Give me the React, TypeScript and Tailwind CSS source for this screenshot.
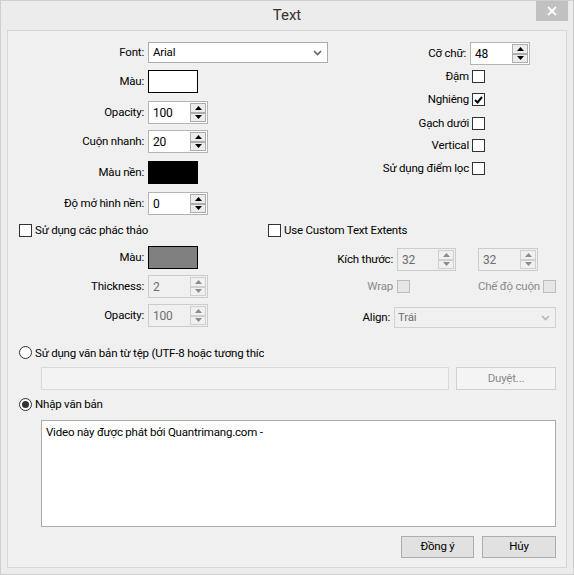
import type { ReactNode } from "react";

function Triangle({ up, disabled }: { up?: boolean; disabled?: boolean }) {
  const color = disabled ? "#8c8c8c" : "#000000";
  return (
    <svg width="7" height="4" viewBox="0 0 7 4">
      {up ? <path d="M0 4 L3.5 0 L7 4 Z" fill={color} /> : <path d="M0 0 L3.5 4 L7 0 Z" fill={color} />}
    </svg>
  );
}

function Spin({ value, disabled, className = "w-[60px]" }: { value: string; disabled?: boolean; className?: string }) {
  return (
    <div
      className={`flex h-[23px] border ${className} ${
        disabled ? "border-[#cccccc] bg-[#f0f0f0] text-[#6d6d6d]" : "border-[#b4b4b4] bg-white text-black"
      }`}
    >
      <span className="flex flex-1 items-center pl-[4px] text-[12px]">{value}</span>
      <div className="flex w-[17px] flex-col py-[1px] pr-[1px]">
        <div
          className={`flex h-[10px] items-center justify-center border ${
            disabled ? "border-[#cfcfcf] bg-[#f0f0f0]" : "border-[#adadad] bg-[#ececec]"
          }`}
        >
          <Triangle up disabled={disabled} />
        </div>
        <div
          className={`flex h-[10px] items-center justify-center border ${
            disabled ? "border-[#cfcfcf] bg-[#f0f0f0]" : "border-[#adadad] bg-[#ececec]"
          }`}
        >
          <Triangle disabled={disabled} />
        </div>
      </div>
    </div>
  );
}

function Chevron({ disabled }: { disabled?: boolean }) {
  return (
    <svg width="9" height="6" viewBox="0 0 9 6">
      <path d="M1 1 L4.5 4.5 L8 1" fill="none" stroke={disabled ? "#b5b5b5" : "#606060"} strokeWidth="1.6" />
    </svg>
  );
}

function Check({ checked, disabled }: { checked?: boolean; disabled?: boolean }) {
  return (
    <div
      className={`flex h-[13px] w-[13px] shrink-0 items-center justify-center border ${
        disabled ? "border-[#bcbcbc] bg-[#e6e6e6]" : "border-[#333333] bg-white"
      }`}
    >
      {checked && (
        <svg width="9" height="8" viewBox="0 0 9 8">
          <path d="M1 4 L3.5 6.5 L8 1" fill="none" stroke="#000" strokeWidth="2" />
        </svg>
      )}
    </div>
  );
}

function Radio({ selected }: { selected?: boolean }) {
  return (
    <div className="flex h-[13px] w-[13px] shrink-0 items-center justify-center rounded-full border border-[#333333] bg-white">
      {selected && <div className="h-[7px] w-[7px] rounded-full bg-[#333333]" />}
    </div>
  );
}

function Row({ label, children, className = "" }: { label: string; children: ReactNode; className?: string }) {
  return (
    <div className={`flex items-center ${className}`}>
      <span className="w-[136px] text-right">{label}</span>
      <div className="ml-[4px]">{children}</div>
    </div>
  );
}

function Swatch({ color }: { color: string }) {
  return <div className={`h-[23px] w-[50px] border border-black ${color}`} />;
}

export default function App() {
  return (
    <div className="flex h-[575px] w-[574px] flex-col border border-[#cfcfcf] bg-[#ececec] font-['Roboto','Noto_Sans',sans-serif] text-[11.5px] leading-none tracking-[-0.2px] text-black">
      <div className="relative flex h-[29px] shrink-0 items-center justify-center">
        <span className="text-[15px] tracking-normal text-[#333333]">Text</span>
        <div className="absolute right-[5px] top-0 flex h-[20px] w-[32px] items-center justify-center bg-[#c1c1c1]">
          <svg width="10" height="10" viewBox="0 0 10 10">
            <path d="M1 1 L9 9 M9 1 L1 9" stroke="#fff" strokeWidth="1.8" />
          </svg>
        </div>
      </div>

      <div className="mx-[6px] mb-[6px] flex flex-1 flex-col border border-[#d6d6d6] bg-[#f0f0f0] pt-[11px]">
        {/* top section */}
        <div className="flex">
          <div className="flex flex-col">
            <Row label="Font:">
              <div className="flex h-[21px] w-[180px] items-center justify-between border border-[#acacac] bg-white pl-[4px] pr-[5px]">
                <span>Arial</span>
                <Chevron />
              </div>
            </Row>
            <Row label="Màu:" className="mt-[7px]">
              <Swatch color="bg-white" />
            </Row>
            <Row label="Opacity:" className="mt-[8px]">
              <Spin value="100" />
            </Row>
            <Row label="Cuộn nhanh:" className="mt-[6px]">
              <Spin value="20" />
            </Row>
            <Row label="Màu nền:" className="mt-[8px]">
              <Swatch color="bg-black" />
            </Row>
            <Row label="Độ mở hình nền:" className="mt-[8px]">
              <Spin value="0" />
            </Row>
          </div>

          <div className="ml-auto mr-[36px] flex flex-col items-end">
            <div className="flex items-center">
              <span>Cỡ chữ:</span>
              <div className="ml-[4px]">
                <Spin value="48" />
              </div>
            </div>
            <div className="mr-[45px] mt-[5px] flex h-[13px] items-center">
              <span className="mr-[3px]">Đậm</span>
              <Check />
            </div>
            <div className="mr-[45px] mt-[10px] flex h-[13px] items-center">
              <span className="mr-[3px]">Nghiêng</span>
              <Check checked />
            </div>
            <div className="mr-[45px] mt-[11px] flex h-[13px] items-center">
              <span className="mr-[3px]">Gạch dưới</span>
              <Check />
            </div>
            <div className="mr-[45px] mt-[9px] flex h-[13px] items-center">
              <span className="mr-[3px]">Vertical</span>
              <Check />
            </div>
            <div className="mr-[45px] mt-[10px] flex h-[13px] items-center">
              <span className="mr-[3px]">Sử dụng điểm lọc</span>
              <Check />
            </div>
          </div>
        </div>

        {/* middle section */}
        <div className="mt-[9px] flex">
          <div className="flex w-[252px] flex-col">
            <div className="ml-[11px] flex h-[13px] items-center">
              <Check />
              <span className="ml-[3px]">Sử dụng các phác thảo</span>
            </div>
            <Row label="Màu:" className="mt-[9px]">
              <Swatch color="bg-[#808080]" />
            </Row>
            <Row label="Thickness:" className="mt-[6px]">
              <Spin value="2" disabled />
            </Row>
            <Row label="Opacity:" className="mt-[6px]">
              <Spin value="100" disabled />
            </Row>
          </div>

          <div className="flex flex-1 flex-col">
            <div className="ml-[8px] flex h-[13px] items-center">
              <Check />
              <span className="ml-[3px]">Use Custom Text Extents</span>
            </div>
            <div className="mt-[11px] flex items-center">
              <span className="w-[133px] text-right">Kích thước:</span>
              <div className="ml-[4px]">
                <Spin value="32" disabled className="w-[59px]" />
              </div>
              <div className="ml-[22px]">
                <Spin value="32" disabled className="w-[60px]" />
              </div>
            </div>
            <div className="mt-[9px] flex h-[13px] items-center text-[#8a8a8a]">
              <span className="w-[133px] text-right">Wrap</span>
              <div className="ml-[4px]">
                <Check disabled />
              </div>
              <span className="w-[130px] text-right">Chế độ cuộn</span>
              <div className="ml-[3px]">
                <Check disabled />
              </div>
            </div>
            <div className="mt-[14px] flex items-center">
              <span className="w-[130px] text-right">Align:</span>
              <div className="ml-[4px] flex h-[21px] w-[162px] items-center justify-between border border-[#d0d0d0] bg-[#f0f0f0] pl-[3px] pr-[5px] text-[#6d6d6d]">
                <span>Trái</span>
                <Chevron disabled />
              </div>
            </div>
          </div>
        </div>

        {/* bottom section */}
        <div className="ml-[11px] mt-[18px] flex h-[13px] items-center">
          <Radio />
          <span className="ml-[3px] w-[229px] overflow-hidden whitespace-nowrap leading-[16px]">
            Sử dụng văn bản từ tệp (UTF-8 hoặc tương thích)
          </span>
        </div>
        <div className="ml-[33px] mt-[8px] flex">
          <div className="h-[23px] w-[408px] border border-[#d9d9d9] bg-[#f3f3f3]" />
          <div className="ml-[7px] flex h-[23px] w-[100px] items-center justify-center border border-[#d0d0d0] bg-[#f4f4f4] text-[#8a8a8a]">
            Duyệt...
          </div>
        </div>
        <div className="ml-[11px] mt-[8px] flex h-[13px] items-center">
          <Radio selected />
          <span className="ml-[3px]">Nhập văn bản</span>
        </div>
        <div className="ml-[33px] mr-[10px] mt-[9px] h-[107px] border border-[#ababab] bg-white px-[4px] pt-[6px]">
          Video này được phát bởi Quantrimang.com -
        </div>
        <div className="mr-[10px] mt-[9px] flex justify-end gap-[8px]">
          <div className="flex h-[22px] w-[73px] items-center justify-center border border-[#adadad] bg-[#e1e1e1]">
            Đồng ý
          </div>
          <div className="flex h-[22px] w-[74px] items-center justify-center border border-[#adadad] bg-[#e1e1e1]">
            Hủy
          </div>
        </div>
      </div>
    </div>
  );
}
